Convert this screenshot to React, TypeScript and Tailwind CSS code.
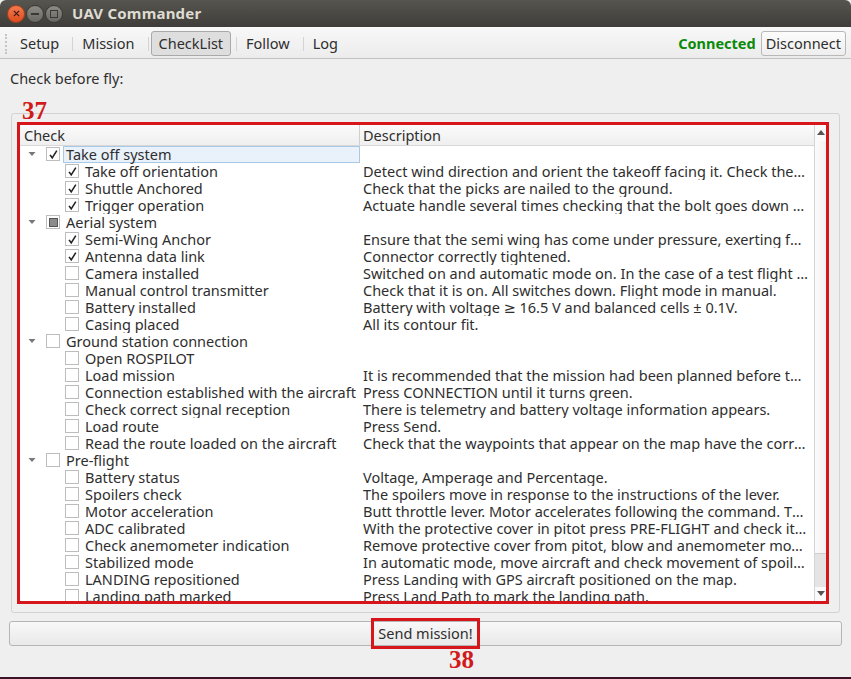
import React from 'react';

type Row = {
  label: string;
  desc?: string;
  parent?: boolean;
  state: 'on' | 'off' | 'part';
  selected?: boolean;
};

const rows: Row[] = [
  { label: 'Take off system', parent: true, state: 'on', selected: true },
  { label: 'Take off orientation', state: 'on', desc: 'Detect wind direction and orient the takeoff facing it. Check the wind speed before take off.' },
  { label: 'Shuttle Anchored', state: 'on', desc: 'Check that the picks are nailed to the ground.' },
  { label: 'Trigger operation', state: 'on', desc: 'Actuate handle several times checking that the bolt goes down and up correctly.' },
  { label: 'Aerial system', parent: true, state: 'part' },
  { label: 'Semi-Wing Anchor', state: 'on', desc: 'Ensure that the semi wing has come under pressure, exerting force on it.' },
  { label: 'Antenna data link', state: 'on', desc: 'Connector correctly tightened.' },
  { label: 'Camera installed', state: 'off', desc: 'Switched on and automatic mode on. In the case of a test flight turn off.' },
  { label: 'Manual control transmitter', state: 'off', desc: 'Check that it is on. All switches down. Flight mode in manual.' },
  { label: 'Battery installed', state: 'off', desc: 'Battery with voltage ≥ 16.5 V and balanced cells ± 0.1V.' },
  { label: 'Casing placed', state: 'off', desc: 'All its contour fit.' },
  { label: 'Ground station connection', parent: true, state: 'off' },
  { label: 'Open ROSPILOT', state: 'off' },
  { label: 'Load mission', state: 'off', desc: 'It is recommended that the mission had been planned before the flight day.' },
  { label: 'Connection established with the aircraft', state: 'off', desc: 'Press CONNECTION until it turns green.' },
  { label: 'Check correct signal reception', state: 'off', desc: 'There is telemetry and battery voltage information appears.' },
  { label: 'Load route', state: 'off', desc: 'Press Send.' },
  { label: 'Read the route loaded on the aircraft', state: 'off', desc: 'Check that the waypoints that appear on the map have the correct altitude.' },
  { label: 'Pre-flight', parent: true, state: 'off' },
  { label: 'Battery status', state: 'off', desc: 'Voltage, Amperage and Percentage.' },
  { label: 'Spoilers check', state: 'off', desc: 'The spoilers move in response to the instructions of the lever.' },
  { label: 'Motor acceleration', state: 'off', desc: 'Butt throttle lever. Motor accelerates following the command. Then return.' },
  { label: 'ADC calibrated', state: 'off', desc: 'With the protective cover in pitot press PRE-FLIGHT and check it is calibrated.' },
  { label: 'Check anemometer indication', state: 'off', desc: 'Remove protective cover from pitot, blow and anemometer moves correctly.' },
  { label: 'Stabilized mode', state: 'off', desc: 'In automatic mode, move aircraft and check movement of spoilers is correct.' },
  { label: 'LANDING repositioned', state: 'off', desc: 'Press Landing with GPS aircraft positioned on the map.' },
  { label: 'Landing path marked', state: 'off', desc: 'Press Land Path to mark the landing path.' },
];

function Check({ state }: { state: Row['state'] }) {
  return (
    <span className="flex size-[14px] shrink-0 items-center justify-center border border-[#bdbdbd] bg-white">
      {state === 'on' && (
        <svg viewBox="0 0 12 12" className="size-[11px]">
          <path d="M2.2 6.4 L4.6 9.6 L9.6 1.8" fill="none" stroke="#222" strokeWidth="1.7" />
        </svg>
      )}
      {state === 'part' && <span className="size-[9px] border border-[#555] bg-[#8c8c8c]" />}
    </span>
  );
}

function TabSep() {
  return <span className="ml-[5px] mr-[1px] h-[14px] w-px bg-[#d4d4d4]" />;
}

function WinBtn({ kind }: { kind: 'close' | 'min' | 'max' }) {
  if (kind === 'close') {
    return (
      <span className="flex size-[18px] items-center justify-center rounded-full border border-[#a9401c] bg-gradient-to-b from-[#f27a4e] to-[#df4b1c]">
        <svg viewBox="0 0 8 8" className="size-[7px]">
          <path d="M1 1 L7 7 M7 1 L1 7" stroke="#3b1a0e" strokeWidth="1.4" />
        </svg>
      </span>
    );
  }
  return (
    <span className="flex size-[18px] items-center justify-center rounded-full border border-[#3a3935] bg-gradient-to-b from-[#8d8b84] to-[#6a6862]">
      {kind === 'min' ? (
        <span className="h-[2px] w-[8px] bg-[#3a3935]" />
      ) : (
        <span className="size-[8px] border-[1.5px] border-[#3a3935]" />
      )}
    </span>
  );
}

export default function App() {
  return (
    <div
      className="relative flex h-[679px] w-[851px] flex-col overflow-hidden bg-[#efefef] text-[14.5px] text-[#2e2e2e]"
      style={{ fontFamily: '"Noto Sans", "DejaVu Sans", sans-serif' }}
    >
      {/* Title bar */}
      <div className="flex h-[27px] shrink-0 items-center rounded-t-[6px] bg-gradient-to-b from-[#57554f] to-[#3e3d39] pl-[7px]">
        <div className="flex items-center gap-[1px]">
          <WinBtn kind="close" />
          <WinBtn kind="min" />
          <WinBtn kind="max" />
        </div>
        <span className="ml-[9px] text-[15px] font-bold tracking-[0.2px] text-[#dfdbd2]">UAV Commander</span>
      </div>

      {/* Toolbar */}
      <div className="flex h-[32px] shrink-0 items-center border-b border-[#c2c2c2] bg-gradient-to-b from-[#f8f8f8] to-[#ececec] pb-[1px] pl-[5px] pr-[5px] pt-[3px]">
        <span className="mr-[5px] h-[20px] w-[2px] border-l-2 border-dotted border-[#c4c4c4]" />
        <span className="px-[8px]">Setup</span>
        <TabSep />
        <span className="px-[8px]">Mission</span>
        <TabSep />
        <span className="ml-[1px] rounded-[3px] border border-[#a9a9a9] bg-[#dedede] px-[7px] py-[1px]">CheckList</span>
        <TabSep />
        <span className="px-[8px]">Follow</span>
        <TabSep />
        <span className="px-[8px]">Log</span>
        <span className="flex-1" />
        <span className="mr-[5px] font-bold text-[#0a8a0a]">Connected</span>
        <span className="rounded-[3px] border border-[#b8b8b8] bg-gradient-to-b from-[#fcfcfc] to-[#eeeeee] px-[4px] py-[1px]">Disconnect</span>
      </div>

      {/* Content */}
      <div className="flex flex-1 flex-col px-[9px] pt-[9px]">
        <div className="pl-[1px]">Check before fly:</div>
        <div className="relative mx-[2px] mt-[23px] h-[500px] rounded-[3px] border border-[#d3d3d3] pb-[8px] pl-[5px] pr-[10px] pt-[8px]">
          <span
            className="absolute left-[10px] top-[-16px] text-[25px] font-bold leading-none text-[#d11a1a]"
            style={{ fontFamily: '"Liberation Serif", serif' }}
          >
            37
          </span>
          <div className="h-[482px] border-[3px] border-[#d7161b]">
            <div className="flex h-full bg-white">
              <div className="flex min-w-0 flex-1 flex-col overflow-hidden">
                {/* Header */}
                <div className="grid h-[21px] shrink-0 grid-cols-[340px_1fr] border-b border-[#d8d8d8] bg-gradient-to-b from-[#fbfbfb] to-[#efefef]">
                  <span className="border-r border-[#d0d0d0] pl-[4px] leading-[20px]">Check</span>
                  <span className="pl-[3px] leading-[20px]">Description</span>
                </div>
                {rows.map((r, i) => (
                  <div key={i} className="grid h-[17px] shrink-0 grid-cols-[340px_1fr] leading-[17px]">
                    {r.parent ? (
                      <div className="flex items-center pl-[8px]">
                        <svg viewBox="0 0 8 8" className="mr-[10px] size-[8px]">
                          <path d="M0.5 2 L7.5 2 L4 6 Z" fill="#777" />
                        </svg>
                        <Check state={r.state} />
                        <span
                          className={
                            r.selected
                              ? 'ml-[3px] h-[17px] flex-1 border border-[#a9c8e3] bg-[#e9f2fb] pl-[2px] leading-[15px]'
                              : 'ml-[3px] pl-[3px]'
                          }
                        >
                          {r.label}
                        </span>
                      </div>
                    ) : (
                      <div className="flex items-center overflow-hidden pl-[45px]">
                        <Check state={r.state} />
                        <span className="ml-[6px] whitespace-nowrap">{r.label}</span>
                      </div>
                    )}
                    <span className="truncate pl-[3px] pr-[6px]">{r.desc}</span>
                  </div>
                ))}
              </div>
              {/* Scrollbar */}
              <div className="flex w-[12px] shrink-0 flex-col border-l border-[#d5d5d5] bg-[#e4e4e4]">
                <div className="flex h-[16px] items-center justify-center bg-[#fafafa]">
                  <svg viewBox="0 0 8 5" className="h-[5px] w-[8px]">
                    <path d="M0 5 L8 5 L4 0 Z" fill="#555" />
                  </svg>
                </div>
                <div className="h-[413px] border-b border-[#cfcfcf] bg-gradient-to-r from-[#fbfbfb] to-[#f1f1f1]" />
                <div className="flex-1" />
                <div className="flex h-[14px] items-center justify-center bg-[#fafafa]">
                  <svg viewBox="0 0 8 5" className="h-[5px] w-[8px]">
                    <path d="M0 0 L8 0 L4 5 Z" fill="#555" />
                  </svg>
                </div>
              </div>
            </div>
          </div>
        </div>

        {/* Send button */}
        <div className="relative mt-[8px] flex h-[25px] items-center justify-center rounded-[3px] border border-[#b5b5b5] bg-gradient-to-b from-[#f8f8f8] to-[#e9e9e9]">
          <span className="border-[3px] border-[#d7161b] px-[4px] leading-[25px]">Send mission!</span>
          <span
            className="absolute left-[439px] top-[25px] text-[25px] font-bold leading-none text-[#d11a1a]"
            style={{ fontFamily: '"Liberation Serif", serif' }}
          >
            38
          </span>
        </div>
      </div>
      <div className="h-[2px] shrink-0 bg-[#3b1226]" />
    </div>
  );
}
